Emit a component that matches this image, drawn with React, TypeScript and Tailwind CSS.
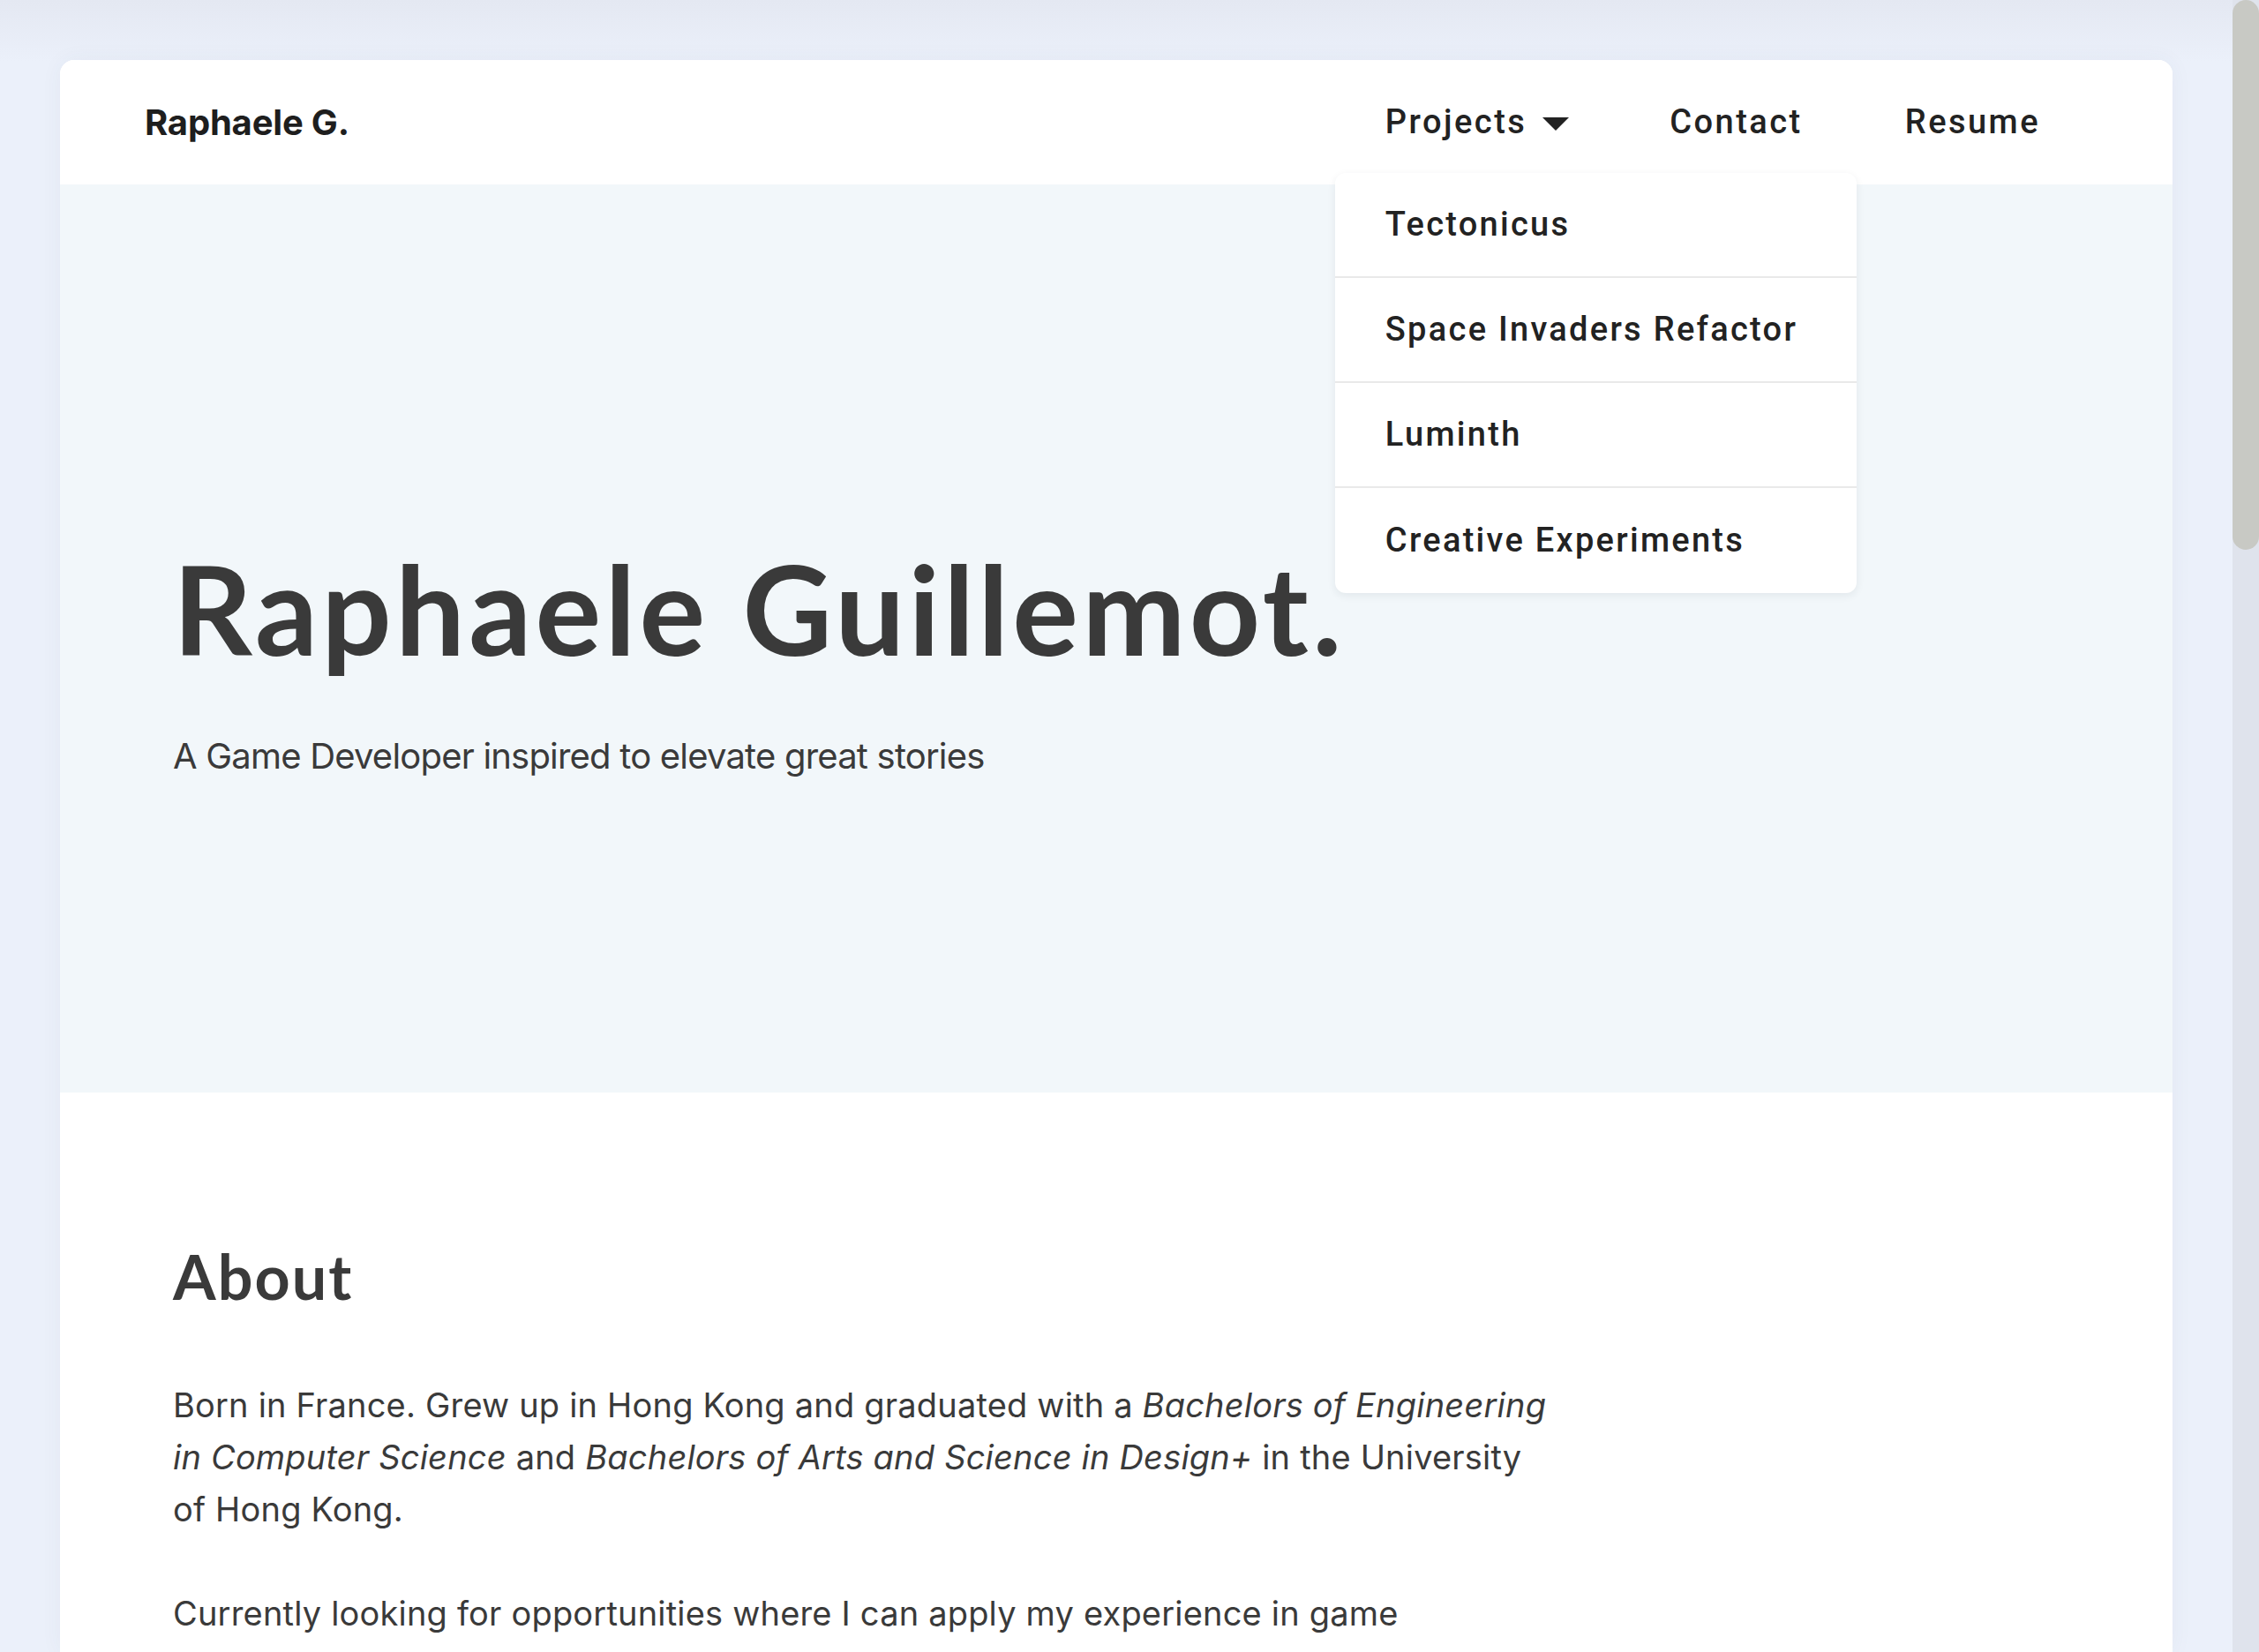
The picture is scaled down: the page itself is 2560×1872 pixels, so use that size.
import { useState } from "react";

const projects = [
  "Tectonicus",
  "Space Invaders Refactor",
  "Luminth",
  "Creative Experiments",
];

const NavBar = () => {
  const [menuOpen, setMenuOpen] = useState(true);

  return (
    <header className="h-[141px] px-[96px] flex items-center justify-between bg-white rounded-t-[16px]">
      <a className="font-['Inter',sans-serif] font-bold text-[40px] tracking-[-0.005em] text-[#1e1e1e]">
        Raphaele G.
      </a>
      <nav className="flex items-center font-['Roboto',sans-serif] font-medium text-[38px] tracking-[0.065em] text-[#222]">
        <div className="relative">
          <button
            onClick={() => setMenuOpen(!menuOpen)}
            className="pl-[57px] pr-[56px] flex items-center gap-[18px] tracking-[0.065em]"
          >
            Projects
            <svg width="30" height="15" viewBox="0 0 30 15" className="mt-[4px]">
              <path d="M0 0 L30 0 L15 15 Z" fill="#222" />
            </svg>
          </button>
          <div
            className={`w-[591px] absolute left-0 top-[86px] bg-white rounded-[12px] shadow-[0_3px_10px_rgba(40,50,70,0.08)] z-10 tracking-[0.06em] ${menuOpen ? "visible" : "invisible"}`}
          >
            {projects.map((p, i) => (
              <a
                key={p}
                className={`h-[119px] pl-[57px] flex items-center ${i < projects.length - 1 ? "border-b-2 border-[#e9e9e9]" : ""}`}
              >
                {p}
              </a>
            ))}
          </div>
        </div>
        <a className="px-[58px]">Contact</a>
        <a className="pl-[58px] pr-[54px]">Resume</a>
      </nav>
    </header>
  );
};

export default function App() {
  return (
    <div className="h-[1872px] overflow-hidden flex bg-[#ebf0fa]">
      <div className="flex-1 px-[68px] pt-[68px] bg-[linear-gradient(to_bottom,#e4e8f2_0px,#ebf0fa_70px)]">
        <main className="bg-white rounded-t-[16px] shadow-[0_0_24px_rgba(60,70,100,0.05)] h-full">
          <NavBar />
          <section className="bg-[#f2f7fa] pl-[128px] pt-[410px] pb-[351px] text-[#3a3a3a]">
            <h1 className="font-['Lato',sans-serif] font-bold text-[140px] leading-none tracking-[0.03em]">
              Raphaele Guillemot.
            </h1>
            <p className="mt-[68px] font-['Inter',sans-serif] text-[40px] leading-[60px] tracking-[-0.02em]">
              A Game Developer inspired to elevate great stories
            </p>
          </section>
          <section className="pl-[128px] pt-[173px] text-[#3a3a3a]">
            <h2 className="font-['Lato',sans-serif] font-bold text-[70px] leading-none tracking-[0.03em]">
              About
            </h2>
            <div className="mt-[82px] font-['Inter',sans-serif] text-[38px] leading-[59px] tracking-[0.005em]">
              <p className="max-w-[1680px]">
                Born in France. Grew up in Hong Kong and graduated with a{" "}
                <em>Bachelors of Engineering</em>
                <br />
                <em>in Computer Science</em> and{" "}
                <em>Bachelors of Arts and Science in Design+</em> in the University
                <br />
                of Hong Kong.
              </p>
              <p className="mt-[59px] max-w-[1570px]">
                Currently looking for opportunities where I can apply my experience in game
                development and interactive storytelling to build meaningful worlds.
              </p>
            </div>
          </section>
        </main>
      </div>
      <div className="w-[30px] bg-[#dfe3ec]">
        <div className="h-[623px] bg-[#c8c9c4] rounded-full" />
      </div>
    </div>
  );
}
